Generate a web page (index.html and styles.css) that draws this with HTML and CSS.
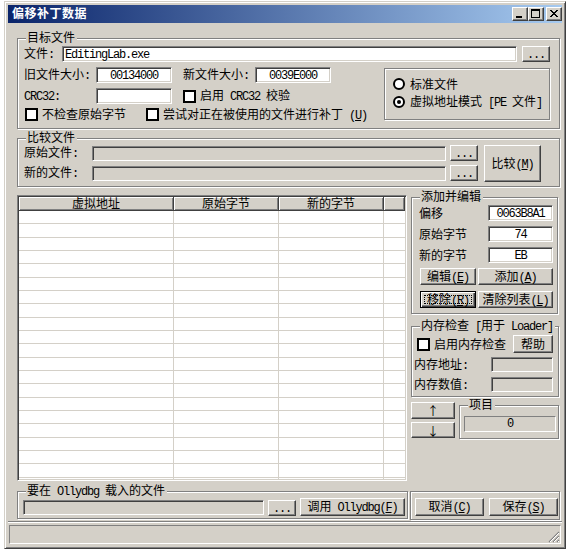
FILE: index.html
```html
<!DOCTYPE html>
<html lang="zh-CN">
<head>
<meta charset="utf-8">
<title>偏移补丁数据</title>
<link rel="stylesheet" href="styles.css">
</head>
<body>
<div class="win">
  <div class="titlebar">
    <span class="title">偏移补丁数据</span>
    <span class="tbtn"><svg width="14" height="12" viewBox="0 0 14 12"><rect x="3" y="8" width="6" height="2" fill="#000"/></svg></span>
    <span class="tbtn tmax"><svg width="14" height="12" viewBox="0 0 14 12"><path d="M2 1h9v9H2zM3 3v6h7V3z" fill="#000" fill-rule="evenodd"/></svg></span>
    <span class="tbtn"><svg width="14" height="12" viewBox="0 0 14 12"><path d="M3 2h2v1H3zM9 2h2v1H9zM4 3h2v1H4zM8 3h2v1H8zM5 4h4v1H5zM6 5h2v1H6zM5 6h4v1H5zM4 7h2v1H4zM8 7h2v1H8zM3 8h2v1H3zM9 8h2v1H9z" fill="#000"/></svg></span>
  </div>
  <div class="client">
    <div class="group g1">
      <span class="legend">目标文件</span>
      <div class="row r1">
        <span class="lbl l-file">文件<span class="m">:</span></span>
        <div class="edit e-file"><span class="m">EditingLab.exe</span></div>
        <div class="btn b-dots"><span class="m">...</span></div>
      </div>
      <div class="g1-body">
        <div class="g1-left">
          <div class="row r2">
            <span class="lbl l-size">旧文件大小<span class="m">:</span></span>
            <div class="edit e-size c"><span class="m">00134000</span></div>
            <span class="lbl l-new">新文件大小<span class="m">:</span></span>
            <div class="edit e-size c"><span class="m">0039E000</span></div>
          </div>
          <div class="row r3">
            <span class="lbl l-size"><span class="m">CRC32:</span></span>
            <div class="edit e-size"></div>
            <span class="chk chk-crc"></span>
            <span class="ctext">启用<span class="m"> CRC32 </span>校验</span>
          </div>
          <div class="row r4">
            <span class="chk chk-orig"></span><span class="ctext t-orig">不检查原始字节</span>
            <span class="chk"></span><span class="ctext">尝试对正在被使用的文件进行补丁<span class="m"> (<u>U</u>)</span></span>
          </div>
        </div>
        <div class="group radiobox">
          <div class="radio-row"><span class="radio"></span><span>标准文件</span></div>
          <div class="radio-row"><span class="radio on"></span><span>虚拟地址模式<span class="m"> [PE </span>文件<span class="m">]</span></span></div>
        </div>
      </div>
    </div>

    <div class="group g2">
      <span class="legend">比较文件</span>
      <div class="g2-left">
        <div class="row ra">
          <span class="lbl l-cmp">原始文件<span class="m">:</span></span>
          <div class="edit dis e-cmp"></div>
          <div class="btn b-dots2"><span class="m">...</span></div>
        </div>
        <div class="row rb">
          <span class="lbl l-cmp">新的文件<span class="m">:</span></span>
          <div class="edit dis e-cmp"></div>
          <div class="btn b-dots2"><span class="m">...</span></div>
        </div>
      </div>
      <div class="btn b-cmp"><span>比较<span class="m">(<u>M</u>)</span></span></div>
    </div>

    <div class="lower">
      <div class="list">
        <div class="lhead">
          <div class="lh c1">虚拟地址</div>
          <div class="lh c2">原始字节</div>
          <div class="lh c3">新的字节</div>
          <div class="lh c4"></div>
        </div>
        <div class="lbody">
          <div class="lcol c1"></div>
          <div class="lcol c2"></div>
          <div class="lcol c3"></div>
          <div class="lcol c4"></div>
        </div>
      </div>

      <div class="rcol">
        <div class="group g-add">
          <span class="legend">添加并编辑</span>
          <div class="row ar ar1">
            <span class="lbl l-add">偏移</span>
            <div class="edit e-add c"><span class="m">0063B8A1</span></div>
          </div>
          <div class="row ar">
            <span class="lbl l-add">原始字节</span>
            <div class="edit e-add c"><span class="m">74</span></div>
          </div>
          <div class="row ar">
            <span class="lbl l-add">新的字节</span>
            <div class="edit e-add c"><span class="m">EB</span></div>
          </div>
          <div class="brow brow1">
            <div class="btn b-edit"><span>编辑<span class="m">(<u>E</u>)</span></span></div>
            <div class="btn b-add"><span>添加<span class="m">(<u>A</u>)</span></span></div>
          </div>
          <div class="brow brow2">
            <div class="btn b-edit focus"><span>移除<span class="m">(<u>R</u>)</span></span></div>
            <div class="btn b-add"><span>清除列表<span class="m">(<u>L</u>)</span></span></div>
          </div>
        </div>

        <div class="group g-mem">
          <span class="legend">内存检查<span class="m"> [</span>用于<span class="m"> Loader]</span></span>
          <div class="row mr1">
            <span class="chk chk-mem"></span>
            <span class="ctext">启用内存检查</span>
            <div class="btn b-help"><span>帮助</span></div>
          </div>
          <div class="row mr2">
            <span class="lbl l-mem">内存地址<span class="m">:</span></span>
            <div class="edit dis e-mem"></div>
          </div>
          <div class="row mr3">
            <span class="lbl l-mem">内存数值<span class="m">:</span></span>
            <div class="edit dis e-mem"></div>
          </div>
        </div>

        <div class="ud">
          <div class="udbtns">
            <div class="btn b-up"><span class="arrow">↑</span></div>
            <div class="btn b-dn"><span class="arrow">↓</span></div>
          </div>
          <div class="group g-item">
            <span class="legend">项目</span>
            <div class="static"><span class="m">0</span></div>
          </div>
        </div>
      </div>
    </div>

    <div class="bottom">
      <div class="group g-olly">
        <span class="legend">要在<span class="m"> Ollydbg </span>载入的文件</span>
        <div class="edit dis e-olly"></div>
        <div class="btn b-dots3"><span class="m">...</span></div>
        <div class="btn b-call"><span>调用<span class="m"> Ollydbg(<u>F</u>)</span></span></div>
      </div>
      <div class="group g-save">
        <div class="btn b-cancel"><span>取消<span class="m">(<u>C</u>)</span></span></div>
        <div class="btn b-save"><span>保存<span class="m">(<u>S</u>)</span></span></div>
      </div>
    </div>

    <div class="sep"></div>
    <div class="status">
      <svg class="grip" width="12" height="12" viewBox="0 0 12 12">
        <path d="M11 1L1 11M11 5L5 11M11 9L9 11" stroke="#808080" stroke-width="1.2" fill="none"/>
        <path d="M11 2L2 11M11 6L6 11M11 10L10 11" stroke="#fff" stroke-width="1" fill="none"/>
      </svg>
    </div>
  </div>
</div>
</body>
</html>
```

FILE: styles.css
```css
* { box-sizing: border-box; margin: 0; padding: 0; }
html, body { width: 569px; height: 551px; overflow: hidden; background: #fff; }
body { font: 12px/12px "Liberation Sans", "Noto Sans CJK SC", "Noto Sans CJK JP", sans-serif; color: #000; }

.m { font-family: "Liberation Mono", monospace; font-size: 12px; letter-spacing: -1.2px; }
u { text-decoration: underline; text-underline-offset: 1px; }
.arrow { font-family: "Noto Sans CJK SC", sans-serif; line-height: 12px; }

.win {
  margin: 1px 0 0 4px;
  width: 562px; height: 548px;
  background: #d4d0c8;
  border: 1px solid; border-color: #d4d0c8 #404040 #404040 #d4d0c8;
  box-shadow: inset 1px 1px #fff, inset -1px -1px #808080;
  padding: 3px;
  display: flex; flex-direction: column;
}

.titlebar {
  height: 18px; flex: none;
  display: flex; align-items: center;
  background: linear-gradient(to right, #0a246a, #a6caf0);
  padding: 0 0 0 4px;
}
.title { flex: 1; color: #fff; font-weight: bold; letter-spacing: 0.5px; line-height: 18px; }
.tbtn {
  width: 16px; height: 14px; flex: none;
  background: #d4d0c8;
  border: 1px solid; border-color: #fff #404040 #404040 #fff;
  box-shadow: inset -1px -1px #808080;
  display: flex;
}
.tmax { margin-right: 2px; }

.client { flex: 1; display: flex; flex-direction: column; }

.group {
  position: relative; flex: none;
  border: 1px solid #808080;
  box-shadow: inset 1px 1px #fff, 1px 1px #fff;
}
.legend {
  position: absolute; top: -7px; left: 8px;
  padding: 0 2px 0 1px;
  background: #d4d0c8; line-height: 12px; white-space: nowrap;
}

.row { display: flex; align-items: center; }
.lbl { flex: none; white-space: nowrap; padding-top: 1px; }

.edit {
  flex: none; height: 16px;
  background: #fff;
  border: 1px solid; border-color: #808080 #fff #fff #808080;
  box-shadow: inset 1px 1px #404040, inset -1px -1px #d4d0c8;
  padding: 1px 2px 0;
  display: flex; align-items: center; white-space: nowrap; overflow: hidden;
}
.edit.c { justify-content: center; }
.edit.dis { background: #d4d0c8; }

.btn {
  flex: none; position: relative;
  background: #d4d0c8;
  border: 1px solid; border-color: #fff #404040 #404040 #fff;
  box-shadow: inset -1px -1px #808080;
  padding-top: 1px;
  display: flex; align-items: center; justify-content: center; white-space: nowrap;
}
.btn.focus {
  border-color: #000;
  box-shadow: inset 1px 1px #fff, inset -1px -1px #404040, inset -2px -2px #808080;
}
.btn.focus::after {
  content: ""; position: absolute; inset: 3px 3px 3px 3px;
  border: 1px dotted #000;
}

.chk { flex: none; width: 13px; height: 13px; background: #fff; border: 2px solid #000; }
.ctext { margin-left: 4px; white-space: nowrap; padding-top: 1px; }

/* group 1 */
.g1 { margin: 15px 0 0 9px; width: 543px; height: 91px; }
.r1 { height: 16px; margin-top: 7px; }
.l-file { width: 44px; padding-left: 6px; }
.e-file { width: 455px; }
.b-dots { width: 28px; height: 16px; margin-left: 5px; }
.g1-body { display: flex; }
.g1-left { width: 366px; }
.r2 { height: 16px; margin-top: 5px; }
.l-size { width: 78px; padding-left: 6px; }
.e-size { width: 76px; }
.l-new { width: 72px; margin-left: 11px; }
.r3 { height: 16px; margin-top: 5px; }
.chk-crc { margin-left: 11px; }
.r4 { height: 13px; margin-top: 4px; }
.chk-orig { margin-left: 7px; }
.t-orig { width: 104px; }

.radiobox { margin-top: 6px; width: 166px; height: 52px; padding: 9px 0 0 8px; }
.radio-row { display: flex; align-items: center; height: 12px; white-space: nowrap; }
.radio-row > span:last-child { padding-top: 1px; }
.radio-row + .radio-row { margin-top: 6px; }
.radio {
  flex: none; position: relative;
  width: 12px; height: 12px; border-radius: 50%;
  border: 2px solid #000; background: #fff; margin-right: 5px;
}
.radio.on::after {
  content: ""; position: absolute; left: 2px; top: 2px;
  width: 4px; height: 4px; border-radius: 50%; background: #000;
}

/* group 2 */
.g2 { margin: 9px 0 0 9px; width: 543px; height: 49px; display: flex; align-items: flex-start; }
.ra { height: 16px; margin-top: 6px; }
.rb { height: 16px; margin-top: 4px; }
.l-cmp { width: 74px; padding-left: 6px; }
.e-cmp { width: 354px; height: 15px; }
.b-dots2 { width: 28px; height: 16px; margin-left: 4px; }
.b-cmp { margin: 6px 0 0 6px; width: 57px; height: 37px; }

/* lower */
.lower { margin: 8px 0 0 9px; display: flex; height: 286px; flex: none; }
.list {
  width: 390px; height: 286px; flex: none;
  background: #fff;
  border: 1px solid; border-color: #808080 #fff #fff #808080;
  box-shadow: inset 1px 1px #404040, inset -1px -1px #d4d0c8;
  padding: 1px;
  display: flex; flex-direction: column;
}
.lhead { display: flex; height: 14px; flex: none; }
.lh {
  background: #d4d0c8;
  box-shadow: inset 1px 1px #fff, inset -1px -1px #808080;
  border-right: 1px solid #404040; border-bottom: 1px solid #404040;
  text-align: center; line-height: 13px; padding-top: 1px; white-space: nowrap;
}
.c1 { width: 155px; flex: none; }
.c2 { width: 105px; flex: none; }
.c3 { width: 105px; flex: none; }
.c4 { flex: 1; }
.lbody {
  flex: 1; display: flex;
  background: repeating-linear-gradient(to bottom,
    transparent 0 12px, #d4d0c8 12px 13px,
    transparent 13px 26px, #d4d0c8 26px 27px,
    transparent 27px 39px, #d4d0c8 39px 40px);
}
.lcol { border-right: 1px solid #d4d0c8; }
.lcol.c4 { border-right: 0; }

.rcol { margin-left: 4px; width: 148px; display: flex; flex-direction: column; align-items: flex-start; }

.g-add { margin-top: 2px; width: 147px; height: 117px; }
.ar { height: 16px; margin-top: 5px; }
.ar1 { margin-top: 7px; }
.l-add { width: 76px; padding-left: 7px; }
.e-add { width: 65px; }
.brow { display: flex; margin-left: 8px; }
.brow1 { margin-top: 5px; }
.brow2 { margin-top: 6px; }
.b-edit { width: 56px; height: 17px; }
.b-add { width: 75px; height: 17px; margin-left: 2px; }

.g-mem { margin-top: 12px; width: 148px; height: 71px; }
.mr1 { margin-top: 8px; height: 18px; }
.chk-mem { margin-left: 5px; }
.b-help { width: 40px; height: 18px; margin-left: auto; margin-right: 5px; }
.mr2 { margin-top: 4px; height: 15px; }
.mr3 { margin-top: 5px; height: 15px; }
.l-mem { width: 79px; padding-left: 2px; }
.e-mem { width: 62px; height: 15px; }

.ud { margin-top: 5px; display: flex; width: 148px; }
.udbtns { display: flex; flex-direction: column; }
.b-up { width: 44px; height: 17px; }
.b-dn { width: 44px; height: 16px; margin-top: 3px; }
.g-item { margin: 3px 0 0 4px; width: 100px; height: 34px; }
.static {
  margin: 10px 0 0 4px; width: 92px; height: 16px;
  border: 1px solid; border-color: #808080 #fff #fff #808080;
  display: flex; align-items: center; justify-content: center;
}

/* bottom */
.bottom { margin: 10px 0 0 9px; display: flex; height: 29px; flex: none; }
.g-olly { width: 391px; height: 28px; display: flex; align-items: flex-start; }
.e-olly { width: 241px; height: 15px; margin: 8px 0 0 5px; }
.b-dots3 { width: 28px; height: 16px; margin: 8px 0 0 4px; }
.b-call { width: 105px; height: 18px; margin: 6px 0 0 4px; }
.g-save { margin-left: 2px; width: 150px; height: 29px; display: flex; align-items: flex-start; }
.b-cancel { width: 69px; height: 18px; margin: 6px 0 0 4px; }
.b-save { width: 69px; height: 18px; margin: 6px 0 0 5px; }

.sep { flex: none; margin-top: 1px; height: 2px; border-top: 1px solid #808080; border-bottom: 1px solid #fff; }
.status {
  flex: none; position: relative;
  margin: 2px 1px 0 1px; height: 19px;
  border: 1px solid; border-color: #808080 #fff #fff #808080;
}
.grip { position: absolute; right: 0; bottom: 0; }
```
